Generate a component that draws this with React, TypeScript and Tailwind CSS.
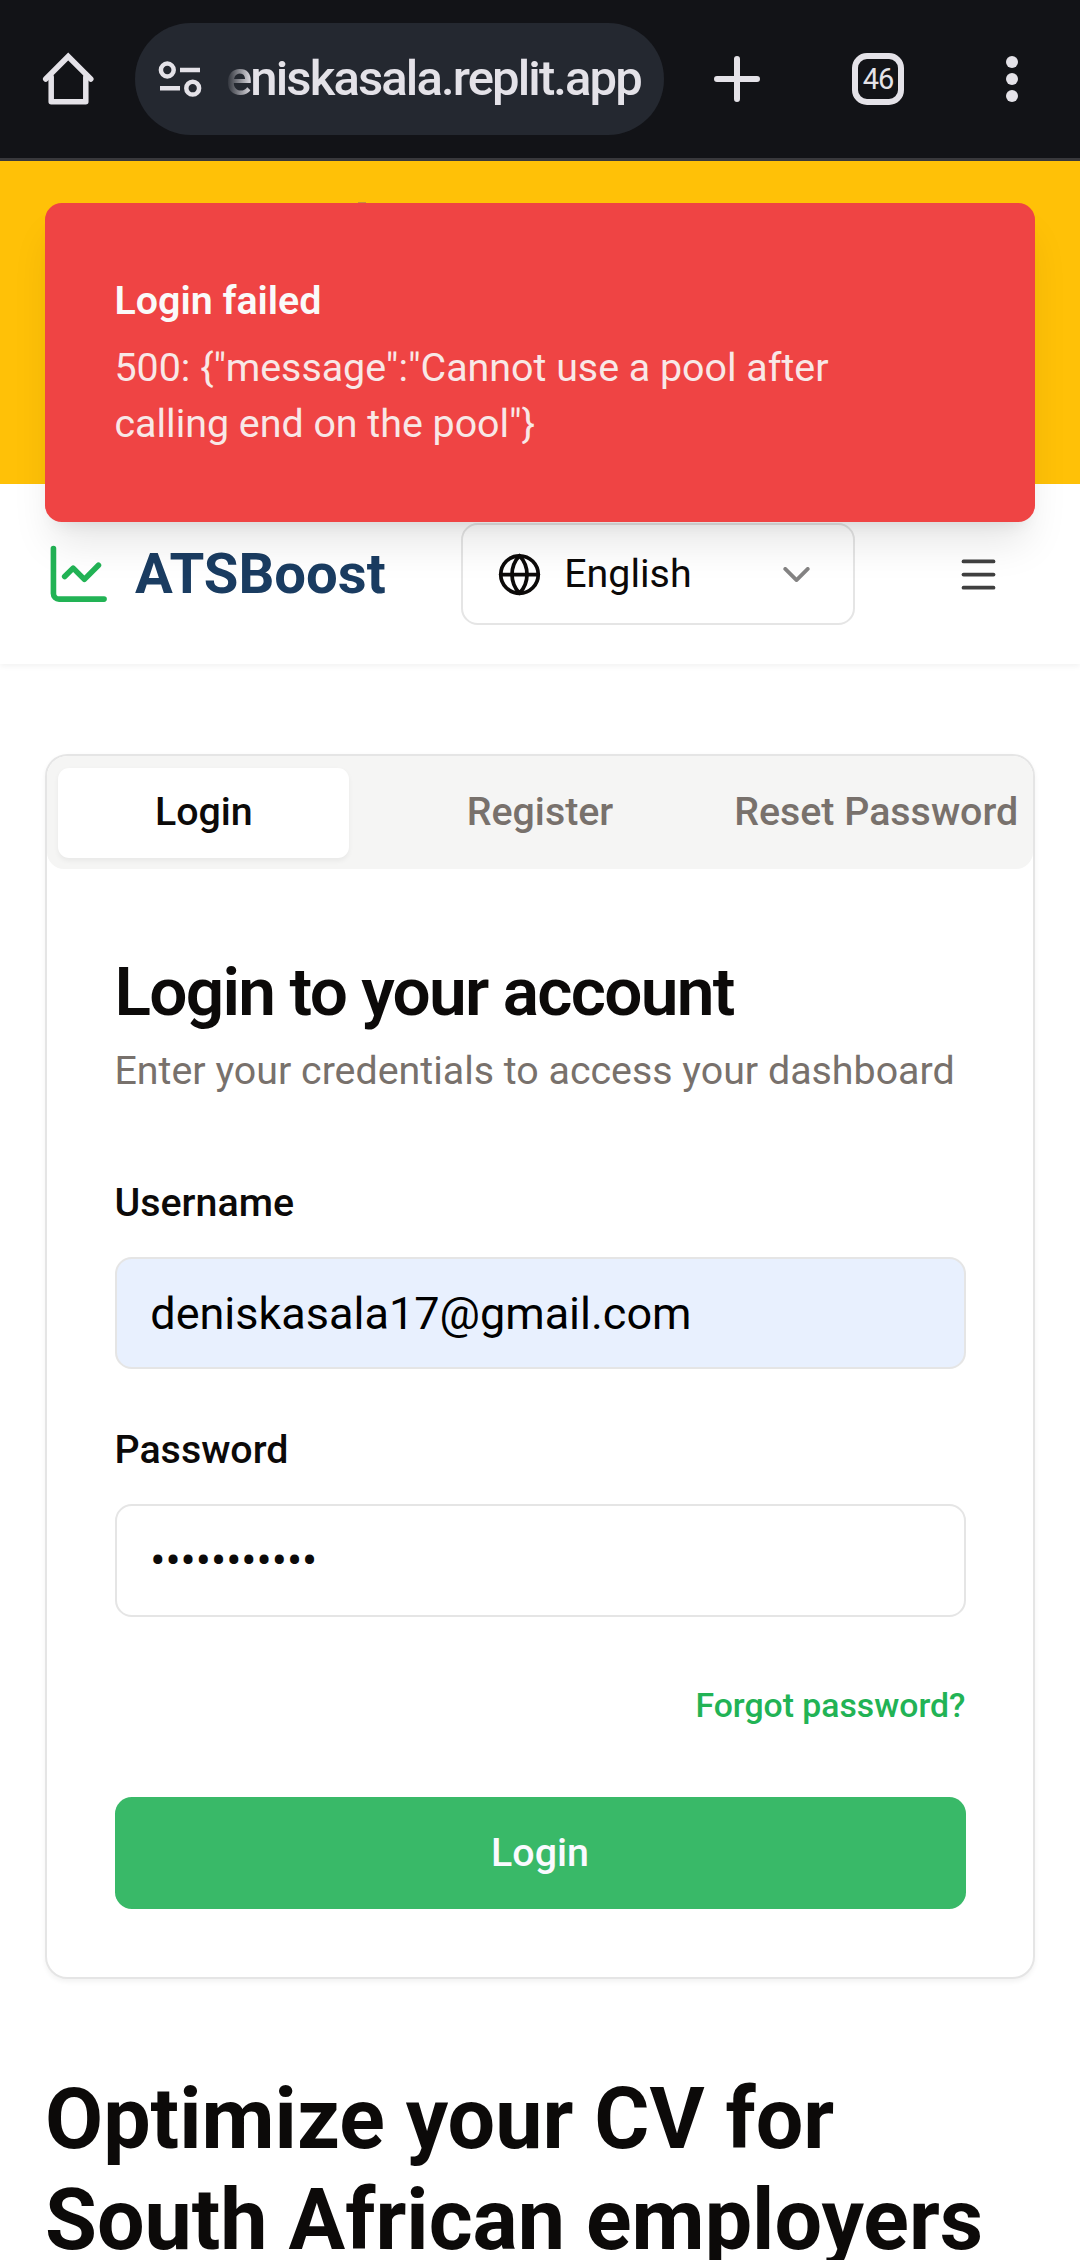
import React from "react";
import { ChartLine, ChevronDown, Globe, Menu } from "lucide-react";

const TOAST_MESSAGE = '500: {"message":"Cannot use a pool after calling end on the pool"}';

function HomeIcon() {
  return (
    <svg width="54" height="54" viewBox="0 0 54 54" fill="none" stroke="#e4e2e8" strokeWidth="5.5" strokeLinejoin="round" strokeLinecap="round">
      <path d="M10.2 25V49.8H44.8V25" />
      <path d="M4.7 27L27.2 4.5L49.8 27" strokeLinejoin="miter" />
    </svg>
  );
}

function TuneIcon() {
  return (
    <svg className="shrink-0" width="46" height="40" viewBox="0 0 46 40" fill="none" stroke="#e4e2e8" strokeWidth="4.5">
      <circle cx="10.3" cy="11" r="6.4" />
      <path d="M23 11H43M3 29.2H23" />
      <circle cx="35.7" cy="29.2" r="6.4" />
    </svg>
  );
}

function BrowserBar() {
  return (
    <div className="flex h-[161px] items-center border-b-[3px] border-[#38383c] bg-[#121317]">
      <div className="flex w-[135px] justify-center">
        <HomeIcon />
      </div>
      <div className="flex h-[112px] w-[529px] items-center rounded-full bg-[#242830] pl-[22px]">
        <TuneIcon />
        <div className="relative ml-[23px] h-[64px] text-[49px] leading-[64px] font-medium tracking-[-1.88px] whitespace-nowrap text-[#e4e2e8]">
          eniskasala.replit.app
          <span className="absolute inset-y-0 left-0 w-[26px] bg-gradient-to-r from-[#242830] to-transparent" />
        </div>
      </div>
      <div className="flex w-[146px] justify-center">
        <svg width="46" height="46" viewBox="0 0 46 46" stroke="#e4e2e8" strokeWidth="6" strokeLinecap="round">
          <path d="M23 3V43M3 23H43" />
        </svg>
      </div>
      <div className="ml-[42px] flex size-[52px] items-center justify-center rounded-[15px] border-[6px] border-[#e4e2e8] text-[29px] leading-none tracking-[-1px] text-[#e4e2e8]">
        46
      </div>
      <div className="ml-[102px] flex flex-col gap-[5px]">
        <span className="size-3 rounded-full bg-[#e4e2e8]" />
        <span className="size-3 rounded-full bg-[#e4e2e8]" />
        <span className="size-3 rounded-full bg-[#e4e2e8]" />
      </div>
    </div>
  );
}

function Toast() {
  return (
    <div className="absolute top-[203px] left-[45px] flex h-[319px] w-[990px] flex-col gap-[11.25px] rounded-[16.875px] border-2 border-[#ef4444] bg-[#ef4444] p-[67.5px] text-[39.375px] leading-[56.25px] text-[#fafaf9] shadow-[0_28px_42px_-8.4px_rgba(0,0,0,0.1),0_11px_17px_-11px_rgba(0,0,0,0.1)]">
      <div className="font-semibold">Login failed</div>
      <div className="w-[760px] opacity-90">{TOAST_MESSAGE}</div>
    </div>
  );
}

function Header() {
  return (
    <header className="flex h-[180px] items-center bg-white px-[45px] shadow-[0_2.8px_5.6px_rgba(0,0,0,0.05)]">
      <div className="flex w-[416px] items-center gap-[22.5px]">
        <ChartLine size={67.5} color="#22b355" />
        <span className="text-[56.25px] leading-[78.75px] font-bold text-[#1a3c61]">ATSBoost</span>
      </div>
      <div className="flex h-[101.25px] w-[393.75px] items-center rounded-[16.875px] border-2 border-[#e5e5e5] px-[33.75px] text-[39.375px] leading-[56.25px]">
        <Globe size={45} />
        <span className="ml-[22.5px] flex-1">English</span>
        <ChevronDown size={45} className="opacity-50" />
      </div>
      <div className="ml-auto flex w-[112.5px] justify-center text-[#404040]">
        <Menu size={45} />
      </div>
    </header>
  );
}

function Field({ label, value, filled }: { label: string; value: string; filled?: boolean }) {
  return (
    <div className="flex flex-col gap-[22.5px]">
      <label className="h-[67.5px] pt-[16px] text-[39.375px] leading-[39.375px] font-medium">{label}</label>
      <div
        className={
          filled
            ? "flex h-[112.5px] items-center rounded-[16.875px] border-2 border-[#e5e5e5] bg-[#e8f0fe] px-[33.75px] pt-[2px] text-[45px] leading-[67.5px] text-black"
            : "flex h-[112.5px] items-center rounded-[16.875px] border-2 border-[#e5e5e5] px-[33.75px] text-[45px] leading-[67.5px]"
        }
      >
        {value}
      </div>
    </div>
  );
}

function AuthCard() {
  return (
    <div className="h-[1225px] overflow-hidden rounded-[22.5px] border-2 border-[#e5e5e5] bg-white shadow-[0_2.8px_5.6px_rgba(0,0,0,0.05)]">
      <div className="grid h-[112.5px] grid-cols-3 gap-[45px] rounded-[16.875px] bg-[#f5f5f4] px-[11.25px] pt-3 pb-[10.5px] text-[39.375px] leading-[56.25px] font-medium whitespace-nowrap text-[#78716c]">
        <div className="flex items-center justify-center rounded-[11.25px] bg-white pb-[2px] text-[#0c0a09] shadow-[0_2.8px_5.6px_rgba(0,0,0,0.05)]">Login</div>
        <div className="flex items-center justify-center pb-[2px]">Register</div>
        <div className="flex items-center justify-center pb-[2px]">Reset Password</div>
      </div>
      <div className="px-[67.5px] pt-[89px]">
        <h2 className="text-[67.5px] leading-none font-semibold tracking-tight">Login to your account</h2>
        <p className="mt-[17.875px] text-[39.375px] leading-[56.25px] text-[#78716c]">Enter your credentials to access your dashboard</p>
        <div className="mt-[67.5px] flex flex-col gap-[45px]">
          <Field label="Username" value="deniskasala17@gmail.com" filled />
          <Field label="Password" value="•••••••••••" />
          <div className="flex h-[90px] items-center justify-end pb-[2px] text-[33.75px] leading-[45px] font-medium text-[#22b355]">Forgot password?</div>
          <div className="flex h-[112.5px] items-center justify-center rounded-[16.875px] bg-[#39b968] text-[39.375px] leading-[56.25px] font-medium text-[#fafaff]">Login</div>
        </div>
      </div>
    </div>
  );
}

export default function App() {
  return (
    <div className="relative h-[2260px] w-[1080px] overflow-hidden bg-white font-['Roboto',sans-serif] text-[#0c0a09]">
      <BrowserBar />
      <div className="h-[323px] bg-[#ffc107]">
        <div className="ml-[358px] h-[42px] w-2 border-b border-[#c78f3c]" />
      </div>
      <Header />
      <main className="px-[45px] pt-[90px]">
        <AuthCard />
        <h1 className="mt-[90px] text-[84.375px] leading-[101.25px] font-bold">
          Optimize your CV for
          <br />
          South African employers
        </h1>
      </main>
      <Toast />
    </div>
  );
}
